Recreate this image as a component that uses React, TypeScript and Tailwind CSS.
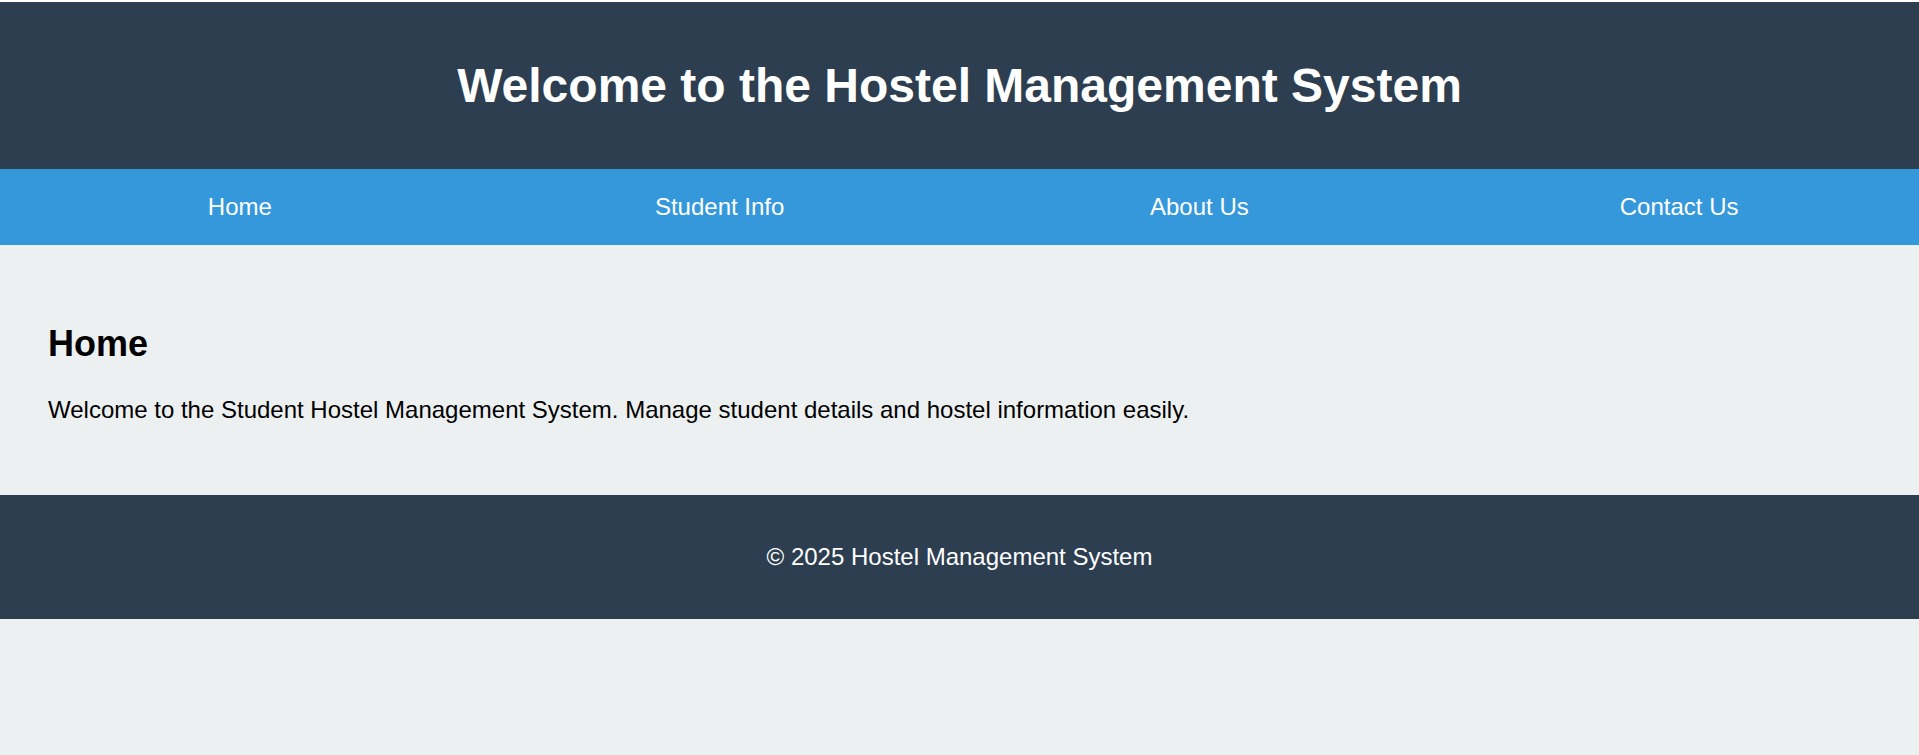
export default function App() {
  return (
    <div className="min-h-[755px] bg-[#ecf0f1] font-['Liberation_Sans',Arial,sans-serif]">
      {/* thin white strip above the header */}
      <div className="h-[2px] bg-white"></div>

      <header className="h-[167px] flex items-center justify-center bg-[#2c3e50]">
        <h1 className="text-[48px] font-bold text-white leading-none">Welcome to the Hostel Management System</h1>
      </header>

      <nav className="h-[76px] grid grid-cols-4 bg-[#3498db]">
        {['Home', 'Student Info', 'About Us', 'Contact Us'].map((item) => (
          <a key={item} href="#" className="flex items-center justify-center text-[24px] text-white">
            {item}
          </a>
        ))}
      </nav>

      <main className="h-[250px] px-[48px] pt-[78px]">
        <h2 className="text-[36px] font-bold text-black leading-[41px]">Home</h2>
        <p className="mt-[32px] text-[24px] text-black leading-[28px]">
          Welcome to the Student Hostel Management System. Manage student details and hostel information easily.
        </p>
      </main>

      <footer className="h-[124px] flex items-center justify-center bg-[#2c3e50]">
        <p className="text-[24px] text-white">&copy; 2025 Hostel Management System</p>
      </footer>
    </div>
  )
}
